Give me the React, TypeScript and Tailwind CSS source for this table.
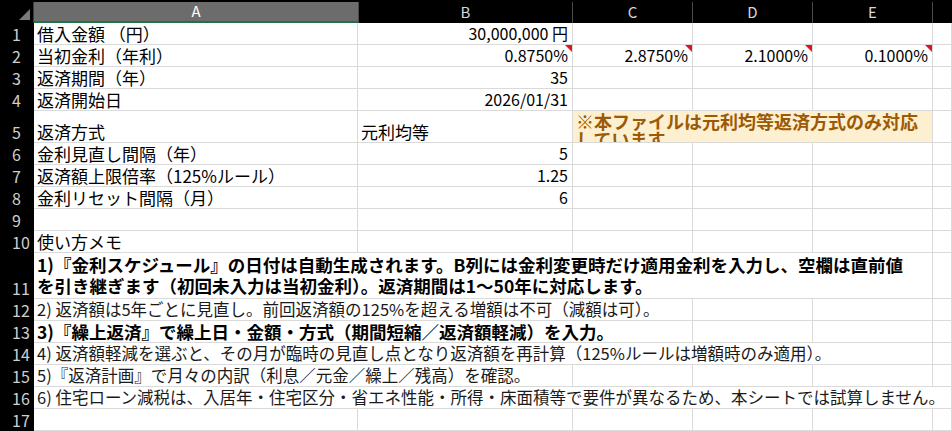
import React from "react";

const cell =
  "relative flex items-end whitespace-nowrap border-b border-r border-[#dadada] px-[3px] leading-[21px]";

const RowHead = ({ n, h }: { n: number; h: string }) => (
  <div className={`flex w-[34px] shrink-0 items-end bg-black pl-[12px] text-[16px] leading-[21px] text-[#cfcfcf] ${h}`}>
    {n}
  </div>
);

const Flag = () => (
  <span className="absolute right-0 top-0 h-0 w-0 border-l-[7px] border-t-[7px] border-l-transparent border-t-[#e0161b]" />
);

const Empty = ({ w }: { w: string }) => <div className={`${cell} ${w}`} />;

const Row = ({
  n,
  h = "h-[22px]",
  children,
}: {
  n: number;
  h?: string;
  children: React.ReactNode;
}) => (
  <div className={`flex ${h}`}>
    <RowHead n={n} h={h} />
    {children}
  </div>
);

const Tail = () => (
  <>
    <Empty w="w-[120px]" />
    <Empty w="w-[120px]" />
    <Empty w="w-[120px]" />
    <Empty w="w-[19px]" />
  </>
);

const LabelRow = ({ n, label, value }: { n: number; label?: string; value?: string }) => (
  <Row n={n}>
    <div className={`${cell} w-[324px] text-[17px]`}>{label}</div>
    <div className={`${cell} w-[215px] justify-end pr-[4px] text-[16px]`}>{value}</div>
    <Tail />
  </Row>
);

export default function App() {
  return (
    <div className="h-[431px] w-[952px] overflow-hidden bg-white font-['Noto_Sans_CJK_JP',sans-serif] text-black">
      {/* column headers */}
      <div className="flex h-[23px] bg-black pt-[2px]">
        <div className="relative w-[34px] shrink-0 border-r border-[#3c3c3c]">
          <svg className="absolute bottom-[3px] right-[3px]" width="11" height="11" viewBox="0 0 11 11">
            <polygon points="11,0 11,11 0,11" fill="#7a7a7a" />
          </svg>
        </div>
        <div className="flex w-[324px] items-center justify-center border-b-2 border-[#217346] bg-[#6c6c6c] text-[15px] text-white">
          A
        </div>
        {["B", "C", "D", "E"].map((c, i) => (
          <div
            key={c}
            className={`flex items-center justify-center border-r border-[#4a4a4a] text-[15px] text-[#d6d6d6] ${i === 0 ? "w-[215px] border-l" : "w-[120px]"}`}
          >
            {c}
          </div>
        ))}
        <div className="w-[19px]" />
      </div>

      <LabelRow n={1} label="借入金額 （円）" value="30,000,000 円" />
      <Row n={2}>
        <div className={`${cell} w-[324px] text-[17px]`}>当初金利（年利）</div>
        <div className={`${cell} w-[215px] justify-end pr-[4px] text-[16px]`}>
          0.8750%
          <Flag />
        </div>
        {["2.8750%", "2.1000%", "0.1000%"].map((v) => (
          <div key={v} className={`${cell} w-[120px] justify-end pr-[4px] text-[16px]`}>
            {v}
            <Flag />
          </div>
        ))}
        <Empty w="w-[19px]" />
      </Row>
      <LabelRow n={3} label="返済期間（年）" value="35" />
      <LabelRow n={4} label="返済開始日" value="2026/01/31" />
      <Row n={5} h="h-[32px]">
        <div className={`${cell} w-[324px] text-[17px]`}>返済方式</div>
        <div className={`${cell} w-[215px] text-[17px]`}>元利均等</div>
        <div className="w-[360px] overflow-hidden border-b border-r border-[#dadada] bg-[#fdf0d0] px-[3px] pt-[1px] text-[18px] font-bold leading-[18px] text-[#9c5a06]">
          ※本ファイルは元利均等返済方式のみ対応しています
        </div>
        <Empty w="w-[19px]" />
      </Row>
      <LabelRow n={6} label="金利見直し間隔（年）" value="5" />
      <LabelRow n={7} label="返済額上限倍率（125%ルール）" value="1.25" />
      <LabelRow n={8} label="金利リセット間隔（月）" value="6" />
      <LabelRow n={9} />
      <LabelRow n={10} label="使い方メモ" />

      <Row n={11} h="h-[46px]">
        <div className={`${cell} w-[899px] whitespace-normal pb-[2px] text-[17.5px] font-bold leading-[21px]`}>
          <div>
            1)『金利スケジュール』の日付は自動生成されます。B列には金利変更時だけ適用金利を入力し、空欄は直前値
            <br />
            を引き継ぎます（初回未入力は当初金利）。返済期間は1～50年に対応します。
          </div>
        </div>
        <Empty w="w-[19px]" />
      </Row>
      <Row n={12}>
        <div className={`${cell} w-[659px] text-[16.5px] text-[#1a1a1a]`}>
          2) 返済額は5年ごとに見直し。前回返済額の125%を超える増額は不可（減額は可）。
        </div>
        <Empty w="w-[120px]" />
        <Empty w="w-[120px]" />
        <Empty w="w-[19px]" />
      </Row>
      <Row n={13}>
        <div className={`${cell} w-[659px] text-[17.5px] font-bold`}>
          3)『繰上返済』で繰上日・金額・方式（期間短縮／返済額軽減）を入力。
        </div>
        <Empty w="w-[120px]" />
        <Empty w="w-[120px]" />
        <Empty w="w-[19px]" />
      </Row>
      <Row n={14}>
        <div className={`${cell} w-[899px] text-[16.5px] text-[#1a1a1a]`}>
          4) 返済額軽減を選ぶと、その月が臨時の見直し点となり返済額を再計算（125%ルールは増額時のみ適用）。
        </div>
        <Empty w="w-[19px]" />
      </Row>
      <Row n={15}>
        <div className={`${cell} w-[539px] text-[16.5px] text-[#1a1a1a]`}>
          5)『返済計画』で月々の内訳（利息／元金／繰上／残高）を確認。
        </div>
        <Tail />
      </Row>
      <Row n={16}>
        <div className={`${cell} w-[918px] text-[16.5px] text-[#1a1a1a]`}>
          6) 住宅ローン減税は、入居年・住宅区分・省エネ性能・所得・床面積等で要件が異なるため、本シートでは試算しません。
        </div>
      </Row>
      <LabelRow n={17} />
    </div>
  );
}
